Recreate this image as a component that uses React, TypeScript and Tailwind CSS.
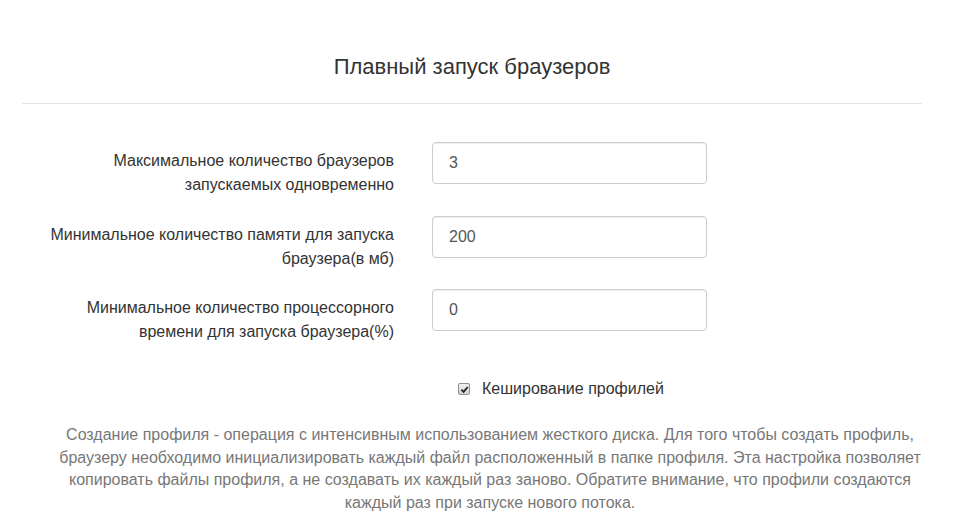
export default function App() {
  const rows = [
    { label: ["Максимальное количество браузеров", "запускаемых одновременно"], value: "3" },
    { label: ["Минимальное количество памяти для запуска", "браузера(в мб)"], value: "200" },
    { label: ["Минимальное количество процессорного", "времени для запуска браузера(%)"], value: "0" },
  ];

  return (
    <div className="w-[961px] h-[520px] bg-white overflow-hidden text-[#333]" style={{ fontFamily: '"Liberation Sans", Arial, sans-serif' }}>
      <div className="ml-[22px] w-[900px]">
        {/* Header */}
        <div className="h-[104px] border-b border-[#e5e5e5] flex items-end justify-center pb-[23px]">
          <h4 className="text-[22px] leading-[27px]">Плавный запуск браузеров</h4>
        </div>

        {/* Form */}
        <div className="pt-[38px] flex flex-col gap-[18.5px]">
          {rows.map((r) => (
            <div key={r.value} className="flex items-start">
              <div className="w-[372px] text-right text-[16px] leading-[24px] pt-[7px]">
                {r.label.map((l) => (
                  <div key={l}>{l}</div>
                ))}
              </div>
              <div className="ml-[38px] w-[275px] h-[42px] border border-[#ccc] rounded-[4px] shadow-[inset_0_1px_1px_rgba(0,0,0,0.075)] flex items-center pl-[16px] text-[16px] text-[#555]">
                {r.value}
              </div>
            </div>
          ))}
        </div>

        {/* Checkbox */}
        <div className="mt-[35px] flex items-center ml-[436px]">
          <span className="w-[12px] h-[12px] border border-[#8f8f8f] rounded-[2px] bg-gradient-to-b from-[#f2f2f2] to-[#d4d4d4] flex items-center justify-center">
            <svg width="9" height="9" viewBox="0 0 10 10">
              <path d="M1.5 5.2 L4 7.6 L8.6 2.2" stroke="#222" strokeWidth="2" fill="none" />
            </svg>
          </span>
          <span className="ml-[12px] text-[16px] leading-[20px]">Кеширование профилей</span>
        </div>
      </div>

      {/* Note */}
      <p className="mt-[25px] ml-[48px] w-[884px] text-center text-[16px] leading-[22.5px] text-[#777]">
        Создание профиля - операция с интенсивным использованием жесткого диска. Для того чтобы создать профиль, браузеру необходимо инициализировать каждый файл расположенный в папке профиля. Эта настройка позволяет копировать файлы профиля, а не создавать их каждый раз заново. Обратите внимание, что профили создаются каждый раз при запуске нового потока.
      </p>
    </div>
  );
}
